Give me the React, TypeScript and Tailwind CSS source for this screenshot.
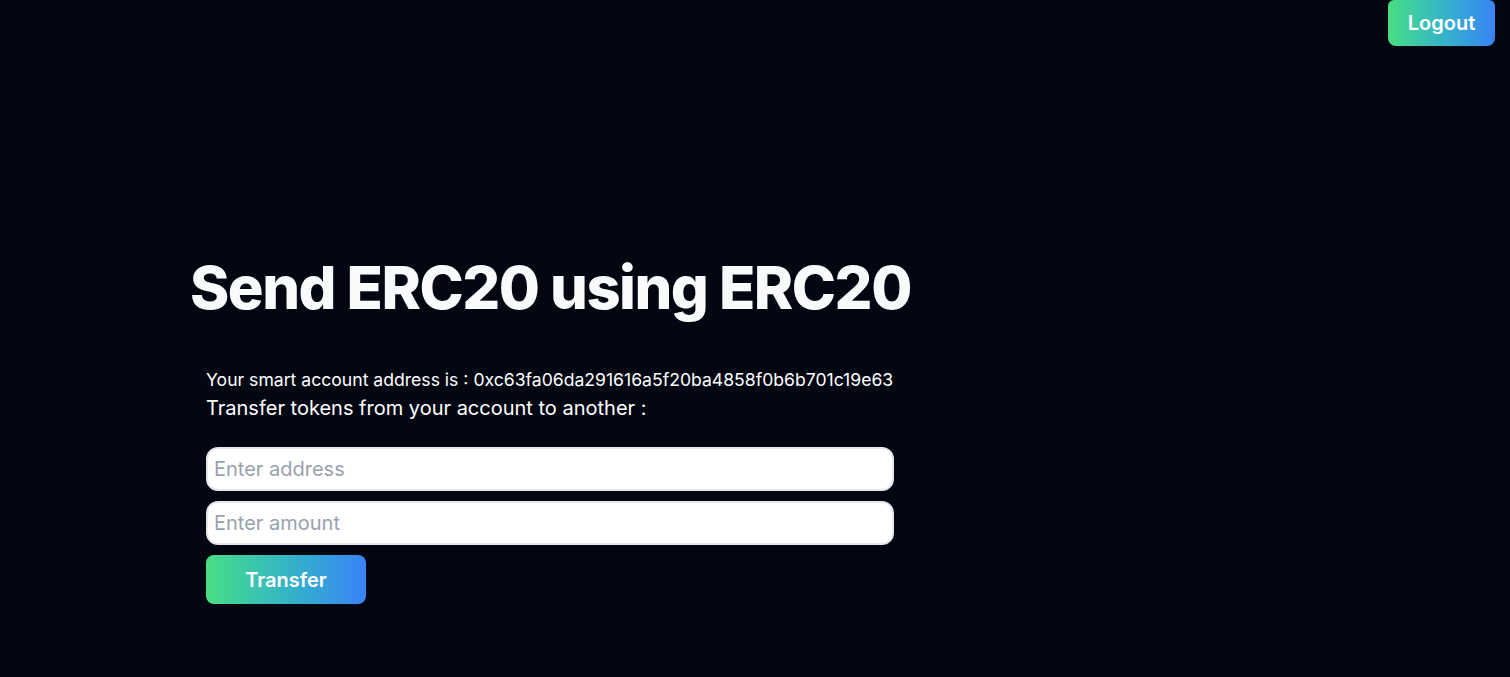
export default function App() {
  return (
    <div
      className="min-h-screen bg-[#030712] text-white"
      style={{ fontFamily: "Inter, 'Noto Sans', sans-serif" }}
    >
      <div className="flex justify-end pr-[15px]">
        <button className="h-[46px] w-[107px] rounded-b-lg rounded-t-md bg-gradient-to-r from-[#4ade80] to-[#3b82f6] text-xl font-semibold text-white">
          Logout
        </button>
      </div>

      <div className="pl-[190px] pt-[211px]">
        <h1 className="text-[59.6px] leading-[60px] font-extrabold tracking-tight text-gray-50">Send ERC20 using ERC20</h1>

        <div className="mt-[49px] pl-[16px]">
          <p className="text-[17.6px] leading-7 whitespace-nowrap">
            Your smart account address is : 0xc63fa06da291616a5f20ba4858f0b6b701c19e63
          </p>
          <p className="text-xl leading-7">Transfer tokens from your account to another :</p>

          <div className="mt-[25px] flex flex-col gap-[10px]">
            <input
              type="text"
              placeholder="Enter address"
              className="h-[44px] w-[688px] rounded-xl border-2 border-gray-200 bg-white px-[6px] text-xl text-black placeholder:text-gray-400 outline-none"
            />
            <input
              type="text"
              placeholder="Enter amount"
              className="h-[44px] w-[688px] rounded-xl border-2 border-gray-200 bg-white px-[6px] text-xl text-black placeholder:text-gray-400 outline-none"
            />
            <button className="h-[49px] w-[160px] rounded-lg bg-gradient-to-r from-[#4ade80] to-[#3b82f6] text-xl font-semibold text-white">
              Transfer
            </button>
          </div>
        </div>
      </div>
    </div>
  );
}
